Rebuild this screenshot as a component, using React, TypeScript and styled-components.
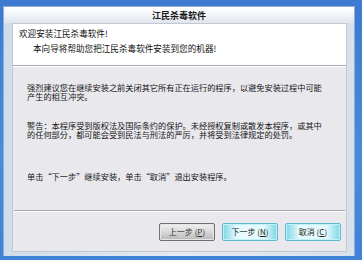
import * as React from "react";
import styled, { createGlobalStyle } from "styled-components";

const GlobalStyle = createGlobalStyle`
  html, body {
    margin: 0;
    padding: 0;
    background: #3f7fd2;
  }
  body {
    font-family: "Noto Sans CJK SC", "Liberation Sans", sans-serif;
  }
`;

const App = () => {
  return (
    <Screen>
      <GlobalStyle />
      <Frame>
        <TitleBar>江民杀毒软件</TitleBar>
        <Client>
          <Header>
            <HeaderLine>欢迎安装江民杀毒软件!</HeaderLine>
            <HeaderLine indent>本向导将帮助您把江民杀毒软件安装到您的机器!</HeaderLine>
          </Header>
          <Etched />
          <Body>
            <Para top={16}>
              强烈建议您在继续安装之前关闭其它所有正在运行的程序，以避免安装过程中可能
              <br />
              产生的相互冲突。
            </Para>
            <Para top={20}>
              警告：本程序受到版权法及国际条约的保护。未经授权复制或散发本程序，或其中
              <br />
              的任何部分，都可能会受到民法与刑法的严厉，并将受到法律规定的处罚。
            </Para>
            <Para top={33}>单击“下一步”继续安装，单击“取消”退出安装程序。</Para>
          </Body>
          <Etched inset />
          <ButtonRow>
            <Button disabled>
              上一步 (<u>P</u>)
            </Button>
            <Button primary>
              下一步 (<u>N</u>)
            </Button>
            <Button primary>
              取消 (<u>C</u>)
            </Button>
          </ButtonRow>
        </Client>
      </Frame>
    </Screen>
  );
};

export default App;

/**
 * 樣式
 */
const Screen = styled.div`
  width: 362px;
  height: 260px;
  box-sizing: border-box;
  padding: 6px 7px 4px 3px;
  display: flex;
  background: linear-gradient(180deg, #3d7ad0 0%, #4a8ad8 60%, #3f82d6 100%);
`;

const Frame = styled.div`
  flex: 1;
  display: flex;
  flex-direction: column;
  box-sizing: border-box;
  border: 1px solid #8eaed8;
  border-bottom: none;
  background: linear-gradient(90deg, #cfdcea 0%, #e4eaf1 50%, #d7e1ec 100%);
  padding: 0 7px 4px 8px;
`;

const TitleBar = styled.div`
  height: 16px;
  display: flex;
  align-items: center;
  justify-content: center;
  font-size: 9px;
  font-weight: 700;
  color: #1a1a1a;
  margin: 0 -7px 0 -8px;
  background: linear-gradient(180deg, #ffffff 0%, #f1f4f8 50%, #dfe5ec 100%);
`;

const Client = styled.div`
  flex: 1;
  display: flex;
  flex-direction: column;
  background: #e9e9ed;
  border: 1px solid #c3c9d2;
`;

const Header = styled.div`
  height: 41px;
  box-sizing: border-box;
  background: #ffffff;
  padding: 5px 0 0 6px;
  display: flex;
  flex-direction: column;
  gap: 6px;
`;

const HeaderLine = styled.div<{ indent?: boolean }>`
  font-size: 8.6px;
  line-height: 9px;
  color: #111;
  padding-left: ${(p) => (p.indent ? "14px" : "0")};
`;

const Etched = styled.div<{ inset?: boolean }>`
  height: 0;
  border-top: 1px solid #a7a7ab;
  border-bottom: 1px solid #ffffff;
  margin: 0 ${(p) => (p.inset ? "1px" : "0")};
`;

const Body = styled.div`
  flex: 1;
  padding: 0 0 0 14px;
  display: flex;
  flex-direction: column;
`;

const Para = styled.p<{ top: number }>`
  margin: ${(p) => p.top}px 0 0 0;
  font-size: 8.2px;
  line-height: 9px;
  color: #151515;
  white-space: nowrap;
`;

const ButtonRow = styled.div`
  height: 39px;
  display: flex;
  justify-content: flex-end;
  align-items: center;
  gap: 7px;
  padding-right: 5px;
`;

const Button = styled.button<{ primary?: boolean }>`
  width: 56px;
  height: 18px;
  padding: 0;
  font-family: "Noto Sans CJK SC", "Liberation Sans", sans-serif;
  font-size: 8px;
  line-height: 1;
  color: #222;
  border-radius: 2px;
  border: 1px solid ${(p) => (p.primary ? "#5bbcd0" : "#6f6f6f")};
  background: ${(p) =>
    p.primary
      ? "linear-gradient(90deg, #7fd6e4 0%, #e6fbfd 25%, #e6fbfd 75%, #7fd6e4 100%)"
      : "linear-gradient(180deg, #f0f0f0 0%, #d8d8d8 50%, #b8b8b8 100%)"};
  box-shadow: inset 0 0 0 1px ${(p) => (p.primary ? "#c4f1f7" : "#e6e6e6")};
  u {
    text-decoration: underline;
  }
  &:disabled {
    color: #333;
  }
`;
